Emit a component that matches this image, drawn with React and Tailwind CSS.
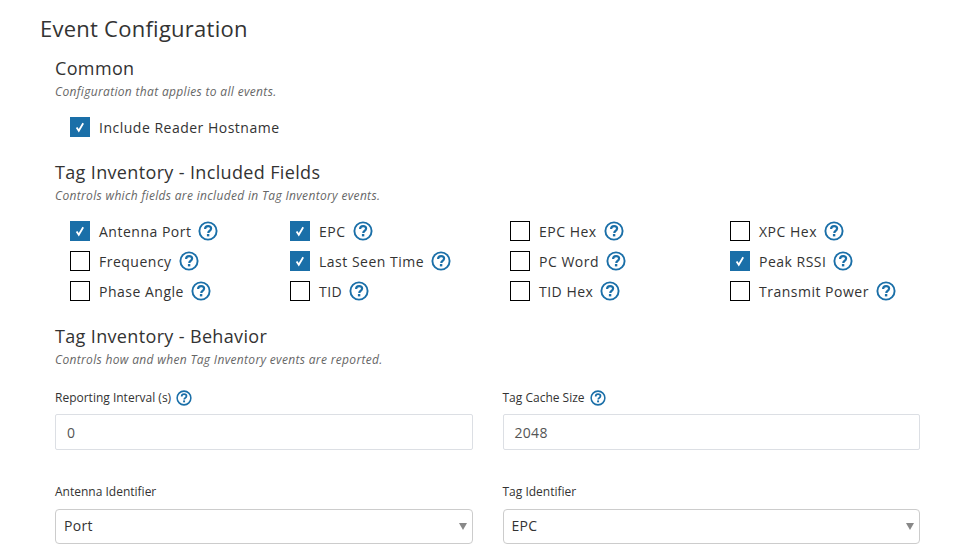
import React from 'react';

const HelpIcon = ({ size = 20 }) => (
  <svg width={size} height={size} viewBox="0 0 20 20" className="shrink-0 text-[#1a6fa8]" fill="none">
    <circle cx="10" cy="10" r="8.6" stroke="currentColor" strokeWidth="1.9" />
    <path d="M7.1 8c0-1.8 1.2-2.9 3-2.9 1.8 0 3 1.1 3 2.5 0 1.3-.8 1.9-1.6 2.4-.8.5-1.2.9-1.2 1.9" stroke="currentColor" strokeWidth="2.2" />
    <rect x="8.9" y="13" width="2.4" height="2.4" fill="currentColor" />
  </svg>
);

const Checkbox = ({ checked }) =>
  checked ? (
    <span className="w-5 h-5 shrink-0 bg-[#1a6fa8] flex items-center justify-center text-white">
      <svg width="20" height="20" viewBox="0 0 20 20" fill="none">
        <path d="M6.6 10.4l2.2 3.4 4.4-7.6" stroke="currentColor" strokeWidth="1.8" />
      </svg>
    </span>
  ) : (
    <span className="w-5 h-5 shrink-0 bg-white border border-black" />
  );

const Field = ({ label, checked, help = true }) => (
  <div className="flex items-center h-[30px]">
    <Checkbox checked={checked} />
    <span className="ml-[9px] mr-[7px] text-[14px] tracking-[0.5px] text-[#333]">{label}</span>
    {help && <HelpIcon />}
  </div>
);

const SectionHead = ({ title, desc }) => (
  <div>
    <h2 className="text-[18px] leading-6 tracking-[0.35px] text-[#333]">{title}</h2>
    <p className="mt-1 text-[12px] leading-4 tracking-[0.33px] italic text-[#666]">{desc}</p>
  </div>
);

const TextField = ({ label, value, help }) => (
  <div>
    <div className="flex items-center h-[22px] gap-[5px] text-[12px] text-[#333]">
      {label}
      {help && <HelpIcon size={16} />}
    </div>
    <div className="mt-[5px] h-9 px-[11px] flex items-center border border-[#dcdfe4] rounded-[2px] text-[14px] tracking-[0.3px] text-[#555]">
      {value}
    </div>
  </div>
);

const SelectField = ({ label, value }) => (
  <div>
    <div className="flex items-center h-5 text-[12px] text-[#333]">{label}</div>
    <div className="mt-[7px] h-[35px] pl-2 pr-[5px] pb-[2px] flex items-center justify-between border border-[#ccc] rounded-[4px] text-[14px] tracking-[0.3px] text-[#333]">
      {value}
      <span className="mt-[2px] w-0 h-0 border-x-[4px] border-x-transparent border-t-[7px] border-t-[#888]" />
    </div>
  </div>
);

const fields = [
  { label: 'Antenna Port', checked: true },
  { label: 'EPC', checked: true },
  { label: 'EPC Hex' },
  { label: 'XPC Hex' },
  { label: 'Frequency' },
  { label: 'Last Seen Time', checked: true },
  { label: 'PC Word' },
  { label: 'Peak RSSI', checked: true },
  { label: 'Phase Angle' },
  { label: 'TID' },
  { label: 'TID Hex' },
  { label: 'Transmit Power' },
];

export default function App() {
  return (
    <div className="w-[960px] h-[560px] overflow-hidden bg-white px-10 pt-[13px] font-['Open_Sans',sans-serif]">
      <h1 className="text-[22px] leading-[30px] tracking-[0.25px] text-[#333]">Event Configuration</h1>
      <div className="pl-[15px]">
        {/* Common */}
        <div className="mt-[13px]">
          <SectionHead title="Common" desc="Configuration that applies to all events." />
          <div className="mt-3 pl-[15px]">
            <Field label="Include Reader Hostname" checked help={false} />
          </div>
        </div>

        {/* Included fields */}
        <div className="mt-[18px]">
          <SectionHead title="Tag Inventory - Included Fields" desc="Controls which fields are included in Tag Inventory events." />
          <div className="mt-3 pl-[15px] grid grid-cols-[220px_220px_220px_190px]">
            {fields.map((f) => (
              <Field key={f.label} label={f.label} checked={f.checked} />
            ))}
          </div>
        </div>

        {/* Behavior */}
        <div className="mt-[18px]">
          <SectionHead title="Tag Inventory - Behavior" desc="Controls how and when Tag Inventory events are reported." />
          <div className="mt-[19px] grid grid-cols-2 gap-x-[30px] gap-y-8">
            <TextField label="Reporting Interval (s)" value="0" help />
            <TextField label="Tag Cache Size" value="2048" help />
            <SelectField label="Antenna Identifier" value="Port" />
            <SelectField label="Tag Identifier" value="EPC" />
          </div>
        </div>
      </div>
    </div>
  );
}
